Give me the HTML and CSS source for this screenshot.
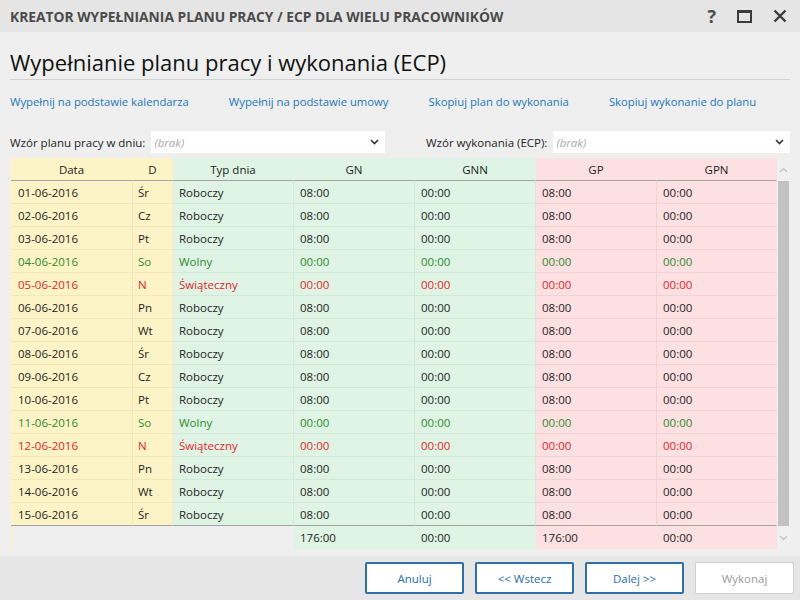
FILE: index.html
```html
<!DOCTYPE html>
<html lang="pl">
<head>
<meta charset="utf-8">
<title>Kreator</title>
<link rel="stylesheet" href="styles.css">
</head>
<body>
<div class="window">
  <header class="titlebar">
    <span class="title">KREATOR WYPEŁNIANIA PLANU PRACY / ECP DLA WIELU PRACOWNIKÓW</span>
    <div class="win-icons">
      <span class="help">?</span>
      <span class="maximize"></span>
      <svg class="close" width="14" height="14" viewBox="0 0 14 14"><path d="M1.5 1.5 L12.5 12.5 M12.5 1.5 L1.5 12.5" stroke="#3c3c3c" stroke-width="2.4" fill="none"/></svg>
    </div>
  </header>

  <main class="content">
    <h1 class="heading">Wypełnianie planu pracy i wykonania (ECP)</h1>

    <nav class="links">
      <a>Wypełnij na podstawie kalendarza</a>
      <a>Wypełnij na podstawie umowy</a>
      <a>Skopiuj plan do wykonania</a>
      <a>Skopiuj wykonanie do planu</a>
    </nav>

    <div class="patterns">
      <label class="field field-plan">
        <span class="field-label">Wzór planu pracy w dniu:</span>
        <span class="combo"><span class="placeholder">(brak)</span>
          <svg width="9" height="6" viewBox="0 0 9 6"><path d="M1 1 L4.5 4.5 L8 1" stroke="#333" stroke-width="1.6" fill="none"/></svg>
        </span>
      </label>
      <label class="field field-exec">
        <span class="field-label">Wzór wykonania (ECP):</span>
        <span class="combo"><span class="placeholder">(brak)</span>
          <svg width="9" height="6" viewBox="0 0 9 6"><path d="M1 1 L4.5 4.5 L8 1" stroke="#333" stroke-width="1.6" fill="none"/></svg>
        </span>
      </label>
    </div>

    <div class="grid">
      <div class="table">
        <div class="row head">
          <div class="c y">Data</div><div class="c y">D</div><div class="c g">Typ dnia</div><div class="c g">GN</div><div class="c g">GNN</div><div class="c p">GP</div><div class="c p">GPN</div>
        </div>
        <div class="body" id="body"></div>
        <div class="row foot">
          <div class="c y0"></div><div class="c n"></div><div class="c n"></div><div class="c g">176:00</div><div class="c g">00:00</div><div class="c p">176:00</div><div class="c p">00:00</div>
        </div>
      </div>
      <div class="scrollbar">
        <div class="sb-up"><svg width="9" height="6" viewBox="0 0 9 6"><path d="M1 5 L4.5 1.5 L8 5" stroke="#c4c4c4" stroke-width="1.4" fill="none"/></svg></div>
        <div class="sb-thumb"></div>
        <div class="sb-down"><svg width="9" height="6" viewBox="0 0 9 6"><path d="M1 1 L4.5 4.5 L8 1" stroke="#c4c4c4" stroke-width="1.4" fill="none"/></svg></div>
      </div>
    </div>
  </main>

  <footer class="buttons">
    <button class="btn">Anuluj</button>
    <button class="btn">&lt;&lt; Wstecz</button>
    <button class="btn">Dalej &gt;&gt;</button>
    <button class="btn disabled">Wykonaj</button>
  </footer>
</div>
<script src="script.js"></script>
</body>
</html>
```
FILE: script.js
```js
const days = [
  ["01-06-2016","Śr","w"],["02-06-2016","Cz","w"],["03-06-2016","Pt","w"],
  ["04-06-2016","So","f"],["05-06-2016","N","h"],["06-06-2016","Pn","w"],
  ["07-06-2016","Wt","w"],["08-06-2016","Śr","w"],["09-06-2016","Cz","w"],
  ["10-06-2016","Pt","w"],["11-06-2016","So","f"],["12-06-2016","N","h"],
  ["13-06-2016","Pn","w"],["14-06-2016","Wt","w"],["15-06-2016","Śr","w"]
];
const body = document.getElementById("body");
for (const [date, d, t] of days) {
  const type = t === "w" ? "Roboczy" : t === "f" ? "Wolny" : "Świąteczny";
  const h = t === "w" ? "08:00" : "00:00";
  const row = document.createElement("div");
  row.className = "row " + (t === "f" ? "free" : t === "h" ? "holiday" : "");
  row.innerHTML =
    `<div class="c y">${date}</div><div class="c y">${d}</div>` +
    `<div class="c g">${type}</div><div class="c g">${h}</div><div class="c g">00:00</div>` +
    `<div class="c p">${h}</div><div class="c p">00:00</div>`;
  body.appendChild(row);
}
```
FILE: styles.css
```css
* { box-sizing: border-box; }
html, body { margin: 0; padding: 0; }
body {
  width: 800px;
  height: 600px;
  overflow: hidden;
  font-family: "Open Sans", "Noto Sans", sans-serif;
  font-size: 11.5px;
  color: #1e1e1e;
  background: #efefef;
}
.window { display: flex; flex-direction: column; height: 600px; }

.titlebar {
  height: 32px;
  background: #e5e5e5;
  display: flex;
  align-items: center;
  justify-content: space-between;
  padding: 0 13px 0 10px;
}
.title {
  font-weight: 700;
  font-size: 13.8px;
  color: #4b4b4b;
}
.win-icons { display: flex; align-items: center; gap: 21px; }
.help { font-weight: 700; font-size: 18px; color: #4a4a4a; line-height: 1; }
.maximize {
  width: 15px; height: 13px;
  border: 2px solid #3c3c3c;
  border-top-width: 3px;
}

.content { padding: 0 10px 0 10px; flex: 1; }
.heading {
  margin: 15px 0 0 0;
  font-weight: 400;
  font-size: 22px;
  line-height: 30px;
  color: #111;
  padding-bottom: 2px;
  border-bottom: 1px solid #d2d2d2;
}
.links {
  display: flex;
  gap: 40px;
  margin-top: 14px;
  line-height: 16px;
  font-size: 11.3px;
}
.links a { color: #2277b8; cursor: pointer; }

.patterns {
  display: flex;
  justify-content: space-between;
  margin-top: 21px;
  height: 22px;
}
.field { display: flex; align-items: center; gap: 6px; }
.field-plan { width: 375px; }
.field-exec { width: 364px; }
.field-label { color: #1e1e1e; white-space: nowrap; }
.combo {
  flex: 1;
  height: 22px;
  background: #fff;
  display: flex;
  align-items: center;
  justify-content: space-between;
  padding: 0 6px 0 3px;
}
.placeholder { font-style: italic; color: #a8a8a8; }

.grid {
  display: flex;
  margin: 5px 0 0 1px;
}
.table { width: 766px; }
.row {
  display: grid;
  grid-template-columns: 122px 40px 121px 121px 121px 121px 120px;
  height: 23px;
}
.c {
  display: flex;
  align-items: center;
  padding-left: 6px;
  white-space: nowrap;
  border-right: 1px solid transparent;
  border-bottom: 1px solid transparent;
}
.c.y { background: #fcf3c6; border-color: #f2e7b6; }
.c.g { background: #dff4e4; border-color: #d2e9d8; }
.c.p { background: #fde0e2; border-color: #f2d2d5; }
.row > .c:nth-child(7) { border-right-color: transparent; }
.row > .c:nth-child(2) { border-right: 1px solid #f7efc4; }
.row > .c:first-child { padding-left: 7px; }
.row > .c:nth-child(2) { padding-left: 5px; }

.row.head .c {
  justify-content: center;
  padding-left: 0;
  border-right-color: transparent;
  border-bottom: 1px solid #a3a3a3;
}
.body .row:last-child .c { border-bottom-color: #a3a3a3; }
.row.free .c { color: #2e8a2e; }
.row.holiday .c { color: #e0262c; }

.row.foot .c { border-bottom: none; border-right-color: transparent; }
.row.foot .c.n { background: transparent; }
.row.foot .c.y0 { background: transparent; border-left: 2px solid #fbf1c2; }

.scrollbar {
  width: 13px;
  display: flex;
  flex-direction: column;
  background: #f0f0f0;
}
.sb-up, .sb-down {
  height: 23px;
  display: flex;
  align-items: center;
  justify-content: center;
}
.sb-thumb {
  flex: 1;
  margin: 0 1px;
  background: #c2c2c2;
}

.buttons {
  height: 44px;
  background: #e6e6e6;
  display: flex;
  justify-content: flex-end;
  align-items: flex-start;
  gap: 11px;
  padding: 6px 6px 0 0;
}
.btn {
  width: 99px;
  height: 32px;
  background: #fff;
  border: 2px solid #2d6fa6;
  border-radius: 2px;
  color: #2a6ea5;
  font-family: "Open Sans", "Noto Sans", sans-serif;
  font-size: 11.5px;
  padding: 0;
}
.btn.disabled { border-color: #cfcfcf; border-width: 1px; color: #9b9b9b; }
```
